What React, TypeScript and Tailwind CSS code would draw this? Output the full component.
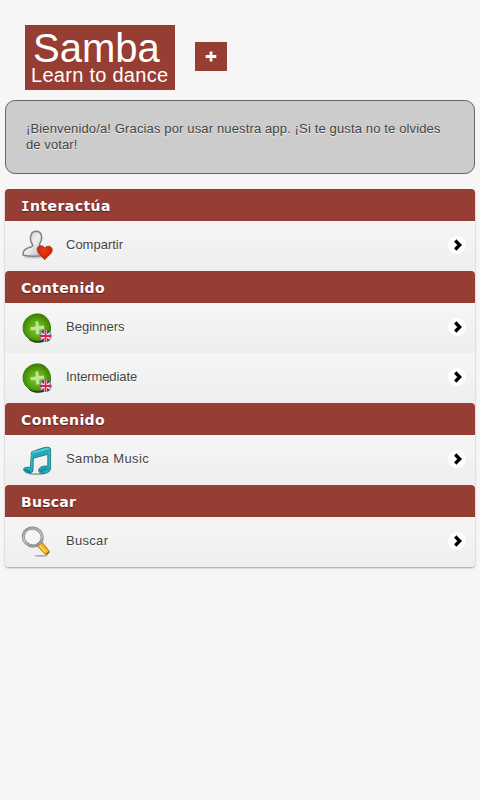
import type { ReactNode } from 'react';

function ShareIcon() {
  return (
    <svg width="32" height="32" viewBox="0 0 32 32">
      <defs>
        <linearGradient id="person" x1="0" y1="0" x2="1" y2="1">
          <stop offset="0" stopColor="#b4b5b8" />
          <stop offset=".45" stopColor="#f1f1f3" />
          <stop offset="1" stopColor="#b3b4b8" />
        </linearGradient>
        <radialGradient id="heart" cx=".45" cy=".35" r=".7">
          <stop offset="0" stopColor="#ee3a12" />
          <stop offset="1" stopColor="#c02000" />
        </radialGradient>
      </defs>
      <ellipse cx="14" cy="27.200" rx="12" ry="1.500" fill="#000" opacity=".15" />
      <path d="M11.500 14.500C8.300 10.500 8.500 1.500 14.900 1.200C21.500 1.200 21.800 9 18.700 13.500L18.500 15.800C21 17.500 23.500 19 24 25C17 26.500 8 26.500 2.200 25.200C1.500 21 4 18.500 9 17.300C11.300 16.800 12 16 11.500 14.500Z" fill="url(#person)" stroke="#808185" strokeWidth="1.500" />
      <path d="M23.700 29.800C21 26.400 16 23.500 16.200 18.900C16.500 15 21.800 14.600 23.700 18C26.300 14.900 31.500 16 31.200 20.200C31 24.200 26.300 26 23.700 29.800Z" fill="url(#heart)" stroke="#8f2410" strokeWidth=".7" />
    </svg>
  );
}

function CourseIcon() {
  return (
    <svg width="32" height="32" viewBox="0 0 32 32">
      <defs>
        <radialGradient id="green" cx=".5" cy=".55" r=".55">
          <stop offset="0" stopColor="#84c93a" />
          <stop offset=".6" stopColor="#58a50e" />
          <stop offset="1" stopColor="#3b7d04" />
        </radialGradient>
        <clipPath id="flag"><circle cx="24.500" cy="24" r="6" /></clipPath>
      </defs>
      <g transform="translate(.7 .7)">
        <path d="M6.500 25C8 31.500 23 31.500 26 26Z" fill="#1d3210" />
        <path d="M15.200 1.200C23 .8 27.800 7 28.800 14C29.500 23 24 28.300 16.500 28.300C8 28.300 1.700 23.500 1.400 15.500C1.200 7 8 1.500 15.200 1.200Z" fill="url(#green)" stroke="#3e7a0b" strokeWidth="1" />
        <path d="M13.800 8.800L16.500 8.600L17.200 13.400L22.200 12.900L22.600 16.300L17.500 16.800L17.700 21.600L14.500 21.800L14.100 17.200L9 17.600L8.700 14.500L14.100 13.900Z" fill="#c3e597" />
      </g>
      <g clipPath="url(#flag)">
        <rect x="17" y="17" width="15" height="15" fill="#303b80" />
        <path d="M17.500 19L31.500 29M31.500 19L17.500 29" stroke="#f4dce5" strokeWidth="1.300" />
        <path d="M24.500 17V32M17 24H32" stroke="#fff" strokeWidth="3.200" />
        <path d="M24.500 17V32M17 24H32" stroke="#dc2546" strokeWidth="1.900" />
      </g>
    </svg>
  );
}

function MusicIcon() {
  return (
    <svg width="32" height="32" viewBox="0 0 32 32">
      <ellipse cx="16" cy="30" rx="8" ry=".9" fill="#000" opacity=".3" />
      <g transform="translate(.3 1)" stroke="#176d78" strokeWidth=".8" strokeLinejoin="round">
        <path d="M10.200 7C15.500 5 22 2.400 26.300 2.100C28.300 2.100 29.300 3.300 29.300 5V22.500C29.500 26.300 26.500 28.500 22 28.500C18.700 28.700 17 27 17.400 24.900C18 22 22 20.600 26.500 21.200V9.300L12 13.300L11.700 25C11.700 28 9 29 6.500 28.100C4 27.500 2 25.600 2.300 23.900C3 21.900 6.500 22 9 22.500Z" fill="#22a9b9" />
        <path d="M10.400 7.100L26.300 2.600L28.200 3.900L12 8.500Z" fill="#58cbd4" stroke="none" />
        <path d="M10.500 9V23M28 5.500V22" stroke="#4cbcc6" />
        <path d="M3.500 24.500L9.500 27.500M19 26.500L25 23.500" stroke="#0b8395" strokeWidth="1.500" />
      </g>
    </svg>
  );
}

function SearchIcon() {
  return (
    <svg width="32" height="32" viewBox="0 0 32 32">
      <defs>
        <linearGradient id="ring" x1="0" y1="0" x2="1" y2="1">
          <stop offset="0" stopColor="#969696" />
          <stop offset=".5" stopColor="#c4c4c4" />
          <stop offset="1" stopColor="#858585" />
        </linearGradient>
      </defs>
      <ellipse cx="20" cy="29.800" rx="7" ry=".9" fill="#000" opacity=".3" />
      <path d="M17.300 18.500L20.800 15.700L28.300 25.200C28.500 26.800 26.500 28.800 24.500 28.700L16.300 20Z" fill="#f0b01c" stroke="#a17016" strokeWidth=".8" />
      <path d="M18.500 19L24.800 26.500" stroke="#ffda55" strokeWidth="1.500" />
      <path d="M25 28.500L28 25.700" stroke="#88691d" strokeWidth="1.300" />
      <ellipse cx="11.700" cy="11" rx="9.500" ry="8.900" transform="rotate(22 11.700 11)" fill="#f5f5f5" stroke="#7b7b7b" strokeWidth="3" />
      <ellipse cx="11.700" cy="11" rx="9.500" ry="8.900" transform="rotate(22 11.700 11)" fill="none" stroke="url(#ring)" strokeWidth="2" />
    </svg>
  );
}

function Heading({ children, tracking }: { children: ReactNode; tracking: string }) {
  return (
    <h2 className={`h-8 rounded-t-[4px] bg-[#963d34] pl-4 font-['DejaVu_Sans',sans-serif] text-[14px] font-bold leading-[34px] text-white [text-shadow:0_1px_1px_#54201b] ${tracking}`}>
      {children}
    </h2>
  );
}

function Row({ icon, children, tracking }: { icon: ReactNode; children: ReactNode; tracking: string }) {
  return (
    <div className="flex h-[50px] items-center bg-linear-to-b from-[#f6f6f6] to-[#eeeeee] pl-4 pr-[9px]">
      <span className="mb-px h-8 w-8 shrink-0">{icon}</span>
      <span className={`ml-[13px] mb-[3px] flex-1 text-[13px] leading-4 text-[#444] [text-shadow:0_1px_0_#fff] ${tracking}`}>{children}</span>
      <span className="mb-0.5 flex h-[18px] w-[18px] items-center justify-center rounded-full bg-white">
        <svg width="18" height="18" viewBox="0 0 18 18" fill="none" stroke="#000" strokeWidth="3.300">
          <path d="M7.200 4.500L11.700 9L7.200 13.500" />
        </svg>
      </span>
    </div>
  );
}

export default function App() {
  return (
    <main className="min-h-screen bg-[#f6f6f6] px-[5px] font-['Liberation_Sans',Arial,sans-serif]">
      <header className="flex h-[100px] pl-5 pt-[25px] text-white">
        <div className="h-[65px] w-[150px] bg-[#963d34] pl-[7px]">
          <h1 className="h-[41px] text-[40px] leading-[47px] indent-[1px]">Samba</h1>
          <p className="-indent-[1px] whitespace-nowrap text-[20px] leading-[18px] tracking-[0.28px]">Learn to dance</p>
        </div>
        <button className="ml-5 mt-[17px] flex h-[29px] w-8 items-center justify-center bg-[#963d34]" aria-label="+">
          <svg width="12" height="12" viewBox="0 0 12 12" stroke="#fff" strokeWidth="2.800">
            <path d="M6 .5V10.500M.7 5.500H11.300" />
          </svg>
        </button>
      </header>
      <p className="h-[74px] rounded-[10px] border border-[#666] bg-[#cccccc] pl-5 pt-5 text-[13px] leading-4 text-[#444] [text-shadow:0_1px_0_#eee]">
        <span className="tracking-[0.14px]">¡Bienvenido/a! Gracias por usar nuestra app. ¡Si te gusta no te olvides</span>
        <br />
        <span className="tracking-[0.1px]">de votar!</span>
      </p>
      <section className="mt-[15px] rounded-[4px] shadow-[0_1px_2px_rgba(0,0,0,0.35)]">
        <Heading tracking="tracking-[0.45px] first-letter:font-['DejaVu_Sans_Mono']">Interactúa</Heading>
        <Row icon={<ShareIcon />} tracking="tracking-[0px]">Compartir</Row>
        <Heading tracking="tracking-[0.4px]">Contenido</Heading>
        <Row icon={<CourseIcon />} tracking="tracking-[0px]">Beginners</Row>
        <Row icon={<CourseIcon />} tracking="tracking-[-0.1px]">Intermediate</Row>
        <Heading tracking="tracking-[0.4px]">Contenido</Heading>
        <Row icon={<MusicIcon />} tracking="tracking-[0.4px]">Samba Music</Row>
        <Heading tracking="tracking-[0.25px]">Buscar</Heading>
        <div className="overflow-hidden rounded-b-[4px]">
          <Row icon={<SearchIcon />} tracking="tracking-[0.3px]">Buscar</Row>
        </div>
      </section>
    </main>
  );
}
